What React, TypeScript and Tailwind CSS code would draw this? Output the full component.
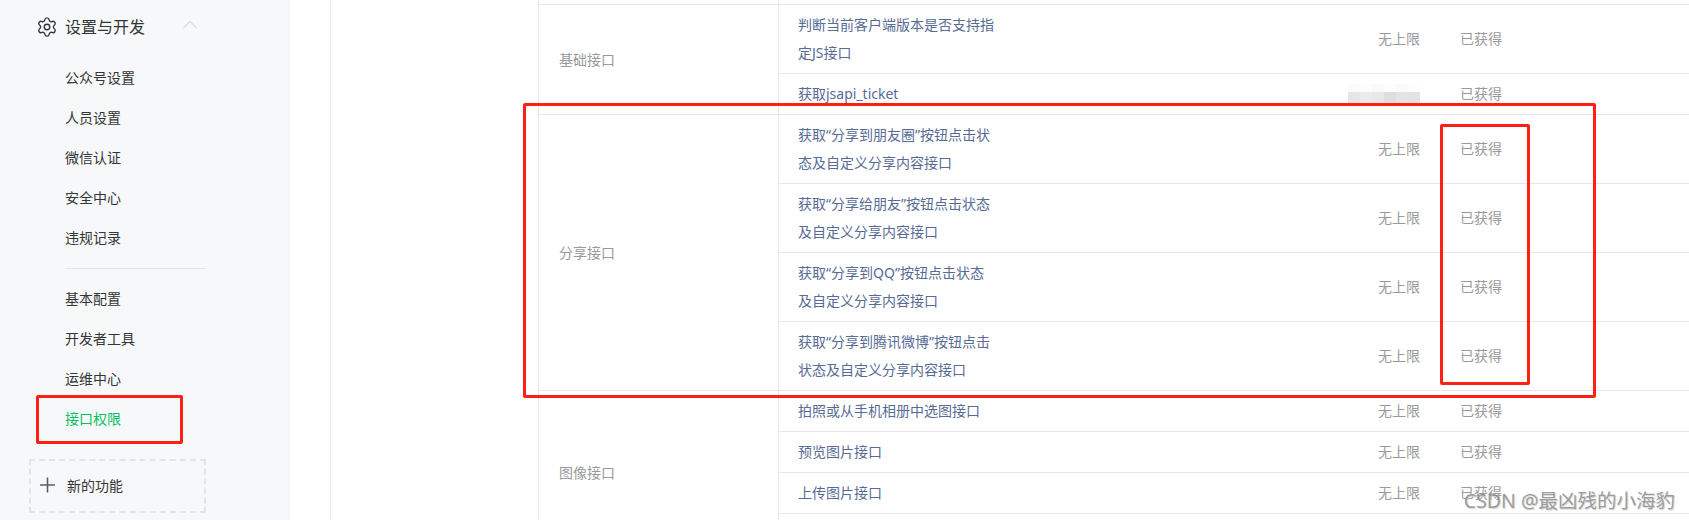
import { Settings } from "lucide-react";

type Row = { name: string[]; limit?: string; status: string; mosaic?: boolean };
type Group = { title: string; rows: Row[] };

const link = (lines: string[]): Row => ({ name: lines, limit: "无上限", status: "已获得" });

const groups: Group[] = [
  {
    title: "基础接口",
    rows: [
      link(["判断当前客户端版本是否支持指", "定JS接口"]),
      { name: ["获取jsapi_ticket"], status: "已获得", mosaic: true },
    ],
  },
  {
    title: "分享接口",
    rows: [
      link(["获取“分享到朋友圈”按钮点击状", "态及自定义分享内容接口"]),
      link(["获取“分享给朋友”按钮点击状态", "及自定义分享内容接口"]),
      link(["获取“分享到QQ”按钮点击状态", "及自定义分享内容接口"]),
      link(["获取“分享到腾讯微博”按钮点击", "状态及自定义分享内容接口"]),
    ],
  },
  {
    title: "图像接口",
    rows: [
      link(["拍照或从手机相册中选图接口"]),
      link(["预览图片接口"]),
      link(["上传图片接口"]),
      { name: [""], status: "" },
    ],
  },
];

const navA = ["公众号设置", "人员设置", "微信认证", "安全中心", "违规记录"];
const navB = ["基本配置", "开发者工具", "运维中心"];

function NavItem({ label, active }: { label: string; active?: boolean }) {
  return (
    <div className={active ? "h-10 pl-[65px] pb-0.5 flex items-center text-[14px] text-[#07c160]" : "h-10 pl-[65px] pb-0.5 flex items-center text-[14px] text-[#353535]"}>
      {label}
    </div>
  );
}

function Mosaic() {
  return (
    <div className="flex flex-col w-[72px]">
      <div className="flex h-[8px]">
        <div className="w-3 bg-[#fbfbfb]" />
        <div className="w-3 bg-[#fdfdfd]" />
        <div className="w-3 bg-[#fafafa]" />
        <div className="w-3 bg-[#fdfdfd]" />
        <div className="w-3 bg-[#fafafa]" />
        <div className="w-3 bg-[#fcfdfc]" />
      </div>
      <div className="flex h-[12px]">
        <div className="w-3 bg-[#e6e6e6]" />
        <div className="w-3 bg-[#ebebeb]" />
        <div className="w-3 bg-[#e8e8e6]" />
        <div className="w-3 bg-[#dedede]" />
        <div className="w-3 bg-[#e3e4e6]" />
        <div className="w-3 bg-[#e3e3e3]" />
      </div>
    </div>
  );
}

function TableRow({ row }: { row: Row }) {
  return (
    <div className="flex items-center border-b border-[#e7e7eb] py-[6px] min-h-[41px] text-[14px] leading-[28px]">
      <div className="w-[561px] pl-[19px] text-[#576b95] whitespace-nowrap">
        {row.name.map((l) => (
          <div key={l}>{l}</div>
        ))}
      </div>
      <div className="w-[80px] flex justify-end text-[#9a9a9a]">
        {row.mosaic ? <Mosaic /> : row.limit}
      </div>
      <div className="pl-10 text-[#9a9a9a]">{row.status}</div>
    </div>
  );
}

function RedBox({ className }: { className: string }) {
  return <div className={"absolute border-[3px] border-[#fe2014] rounded-[2px] " + className} />;
}

export default function App() {
  return (
    <div className="relative flex h-[520px] w-[1689px] overflow-hidden bg-white font-['Noto_Sans','Noto_Sans_CJK_SC',sans-serif]">
      <aside className="w-[290px] shrink-0 bg-[#f6f8f9]">
        <div className="h-[54px] flex items-center">
          <Settings className="ml-[36px] w-[22px] h-[22px] text-[#353535]" strokeWidth={1.5} />
          <span className="ml-[7px] text-[16px] text-[#353535]">设置与开发</span>
          <svg className="ml-[38px] mb-[5px]" width="14" height="9" viewBox="0 0 14 9" fill="none">
            <path d="M0.5 8 L7 1.5 L13.5 8" stroke="#c4c6c8" strokeWidth="1" />
          </svg>
        </div>
        <div className="mt-1">
          {navA.map((l) => (
            <NavItem key={l} label={l} />
          ))}
        </div>
        <div className="ml-[65px] w-[141px] h-px my-[10px] bg-[#e1e3e5]" />
        {navB.map((l) => (
          <NavItem key={l} label={l} />
        ))}
        <NavItem label="接口权限" active />
        <div className="ml-[29px] mt-5 w-[177px] h-[54px] pb-0.5 border-2 border-dashed border-[#e3e4e5] flex items-center text-[14px] text-[#353535]">
          <svg className="ml-[9px]" width="16" height="16" viewBox="0 0 16 16" fill="none">
            <path d="M0 8 H15 M7.5 0.5 V15.5" stroke="#5c5c5c" strokeWidth="1.6" />
          </svg>
          <span className="ml-[11px]">新的功能</span>
        </div>
      </aside>

      <main className="ml-10 flex-1 border-l border-[#e7e7eb] pl-[207px]">
        <div className="flex h-[5px] border-b border-[#e7e7eb]">
          <div className="w-[241px] border-x border-[#e7e7eb]" />
        </div>
        {groups.map((g) => (
          <section key={g.title} className="flex">
            <div className="w-[241px] shrink-0 pl-5 flex items-center border-x border-b border-[#e7e7eb] text-[14px] text-[#9a9a9a]">
              {g.title}
            </div>
            <div className="flex-1">
              {g.rows.map((r) => (
                <TableRow key={r.name[0]} row={r} />
              ))}
            </div>
          </section>
        ))}
      </main>

      <RedBox className="left-[523px] top-[103px] w-[1073px] h-[295px]" />
      <RedBox className="left-[1440px] top-[124px] w-[90px] h-[261px]" />
      <RedBox className="left-[36px] top-[395px] w-[147px] h-[49px]" />

      <div className="absolute right-[14px] top-[487px] text-[19.5px] leading-[28px] text-[#8c8c8c] opacity-85 whitespace-nowrap [text-shadow:1px_1px_1px_#d0d0d0]">
        CSDN @最凶残的小海豹
      </div>
    </div>
  );
}
